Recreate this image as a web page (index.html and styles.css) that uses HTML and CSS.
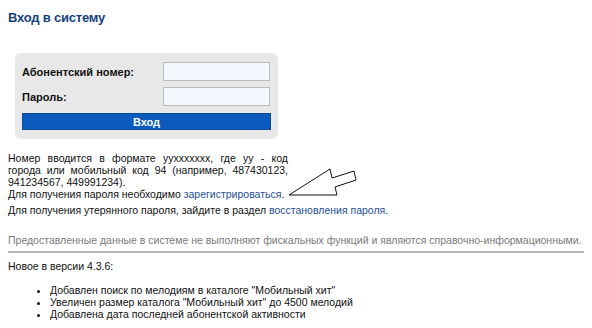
FILE: index.html
```html
<!DOCTYPE html>
<html lang="ru">
<head>
<meta charset="utf-8">
<link rel="stylesheet" href="styles.css">
</head>
<body>
<div class="page">
  <h1 class="title">Вход в систему</h1>
  <form class="login">
    <div class="row">
      <label class="lbl">Абонентский номер:</label>
      <input class="field" type="text">
    </div>
    <div class="row">
      <label class="lbl">Пароль:</label>
      <input class="field" type="password">
    </div>
    <button class="btn" type="button">Вход</button>
  </form>
  <div class="info">
    <p class="fmt">Номер вводится в формате yyxxxxxxx, где yy - код города или мобильный код 94 (например, 487430123, 941234567, 449991234).</p>
    <p class="reg">Для получения пароля необходимо <a class="lnk" href="#">зарегистрироваться</a>.</p>
    <svg class="arrow" width="70" height="32" viewBox="0 0 70 32">
      <polygon points="1,27 42,1 44,10 66,3 68,12 47,19 49,27" fill="#fff" stroke="#111" stroke-width="1"/>
    </svg>
  </div>
  <p class="lost">Для получения утерянного пароля, зайдите в раздел <a class="lnk" href="#">восстановления пароля</a>.</p>
  <p class="note">Предоставленные данные в системе не выполняют фискальных функций и являются справочно-информационными.</p>
  <p class="news">Новое в версии 4.3.6:</p>
  <ul class="list">
    <li>Добавлен поиск по мелодиям в каталоге "Мобильный хит"</li>
    <li>Увеличен размер каталога "Мобильный хит" до 4500 мелодий</li>
    <li>Добавлена дата последней абонентской активности</li>
  </ul>
</div>
</body>
</html>
```
FILE: styles.css
```css
html, body { margin: 0; padding: 0; background: #fff; }
.page {
  padding: 8px 8px 0 8px;
  font-family: "Liberation Sans", Arial, sans-serif;
  font-size: 10.5px;
  color: #111;
}
.title {
  margin: 2px 0 0 0;
  font-size: 13px;
  line-height: 16px;
  font-weight: bold;
  color: #163f7c;
  letter-spacing: -0.2px;
}
.login {
  margin: 27px 0 0 7px;
  width: 249px;
  padding: 9px 7px 9px 7px;
  background: #e8e8e8;
  border-radius: 6px;
  display: flex;
  flex-direction: column;
  gap: 6px;
}
.row {
  display: flex;
  align-items: center;
  justify-content: space-between;
}
.lbl { font-weight: bold; font-size: 11px; color: #111; }
.field {
  box-sizing: border-box;
  width: 107px;
  height: 19px;
  margin: 0 1px 0 0;
  border: 1px solid #b8bcc0;
  background: #f2f8fd;
  padding: 0;
}
.btn {
  margin-top: 1px;
  height: 17px;
  border: 1px solid #0b4c96;
  background: #0a5bbd;
  color: #fff;
  font-family: inherit;
  font-size: 11px;
  font-weight: bold;
  padding: 0;
}
.info {
  position: relative;
  margin-top: 13px;
}
.fmt {
  margin: 0;
  width: 280px;
  line-height: 12px;
  text-align: justify;
  text-align-last: left;
}
.reg { margin: 0; line-height: 12px; }
.arrow {
  position: absolute;
  left: 280px;
  top: 16px;
}
.lnk { color: #1f4f95; text-decoration: none; }
.lost { margin: 4px 0 0 0; line-height: 12px; }
.note {
  margin: 18px 0 0 0;
  padding-bottom: 5px;
  line-height: 12px;
  color: #7a7a7a;
  border-bottom: 2px solid #b5b5b5;
  width: 576px;
  white-space: nowrap;
}
.news { margin: 7px 0 0 0; line-height: 12px; }
.list {
  margin: 12px 0 0 0;
  padding-left: 42px;
  line-height: 12px;
  list-style: disc;
}
```
